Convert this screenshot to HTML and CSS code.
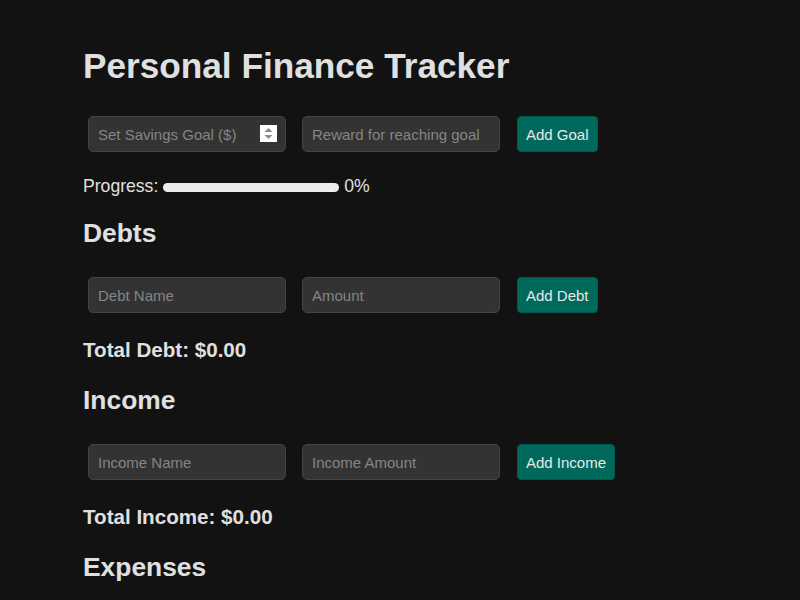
FILE: index.html
```html
<!DOCTYPE html>
<html lang="en">
<head>
<meta charset="utf-8">
<title>Personal Finance Tracker</title>
<link rel="stylesheet" href="styles.css">
</head>
<body>
<main class="app">
  <h1 class="title">Personal Finance Tracker</h1>

  <div class="row row-goal">
    <div class="field field-number">
      <input class="input" type="number" placeholder="Set Savings Goal ($)">
      <span class="spinner" aria-hidden="true">
        <svg width="17" height="17" viewBox="0 0 17 17">
          <rect x="0" y="0" width="17" height="17" fill="#ffffff"/>
          <path d="M4.5 7 L8.5 3 L12.5 7 Z" fill="#8a8a8a"/>
          <path d="M4.5 10 L8.5 14 L12.5 10 Z" fill="#8a8a8a"/>
        </svg>
      </span>
    </div>
    <input class="input" type="text" placeholder="Reward for reaching goal">
    <button class="btn">Add Goal</button>
  </div>

  <div class="progress-line">
    <span>Progress:</span>
    <span class="progress"><span class="progress-fill" style="width:0%"></span></span>
    <span>0%</span>
  </div>

  <h2 class="section-title">Debts</h2>
  <div class="row">
    <input class="input" type="text" placeholder="Debt Name">
    <input class="input" type="number" placeholder="Amount">
    <button class="btn">Add Debt</button>
  </div>
  <h3 class="total">Total Debt: $0.00</h3>

  <h2 class="section-title">Income</h2>
  <div class="row">
    <input class="input" type="text" placeholder="Income Name">
    <input class="input" type="number" placeholder="Income Amount">
    <button class="btn">Add Income</button>
  </div>
  <h3 class="total">Total Income: $0.00</h3>

  <h2 class="section-title">Expenses</h2>
</main>
</body>
</html>
```

FILE: styles.css
```css
html, body {
  margin: 0;
  padding: 0;
  background: #121212;
  height: 100%;
  overflow: hidden;
}

body {
  font-family: "Liberation Sans", Arial, sans-serif;
  font-size: 17.6px;
  color: #e0e0e0;
}

.app {
  display: flex;
  flex-direction: column;
  align-items: flex-start;
  padding: 46px 0 0 83px;
}

.title {
  margin: 0 0 30px;
  font-size: 35.2px;
  line-height: 40px;
  font-weight: bold;
}

.row {
  display: flex;
  align-items: center;
  gap: 16px;
  padding-left: 5px;
  margin: 0 0 25px;
}

.row-goal {
  margin-bottom: 24px;
}

.field {
  position: relative;
  display: flex;
}

.input {
  box-sizing: border-box;
  width: 198px;
  height: 36px;
  padding: 0 9px;
  background: #333333;
  border: 1px solid #444444;
  border-radius: 5px;
  color: #e0e0e0;
  font-family: "Liberation Sans", Arial, sans-serif;
  font-size: 15px;
  outline: none;
  -moz-appearance: textfield;
}

.input::placeholder {
  color: #858585;
}

.input::-webkit-inner-spin-button,
.input::-webkit-outer-spin-button {
  -webkit-appearance: none;
  margin: 0;
}

.spinner {
  position: absolute;
  left: 172px;
  top: 9px;
  width: 17px;
  height: 17px;
  display: block;
}

.spinner svg {
  display: block;
}

.btn {
  box-sizing: border-box;
  height: 36px;
  margin-left: 1px;
  padding: 0 8px;
  background: #00695c;
  border: 1px solid #00594e;
  border-radius: 4px;
  color: #e8e8e8;
  font-family: "Liberation Sans", Arial, sans-serif;
  font-size: 15px;
  cursor: pointer;
}

.progress-line {
  display: flex;
  align-items: center;
  gap: 5px;
  line-height: 20px;
  margin: 0 0 22px;
}

.progress {
  display: block;
  width: 176px;
  height: 9px;
  margin-top: 2px;
  background: #ececec;
  border-radius: 5px;
  overflow: hidden;
}

.progress-fill {
  display: block;
  height: 100%;
  background: #00695c;
}

.section-title {
  margin: 0 0 29px;
  font-size: 26.4px;
  line-height: 30px;
  font-weight: bold;
}

.total {
  margin: 0 0 23px;
  font-size: 20.6px;
  line-height: 24px;
  font-weight: bold;
}
```
